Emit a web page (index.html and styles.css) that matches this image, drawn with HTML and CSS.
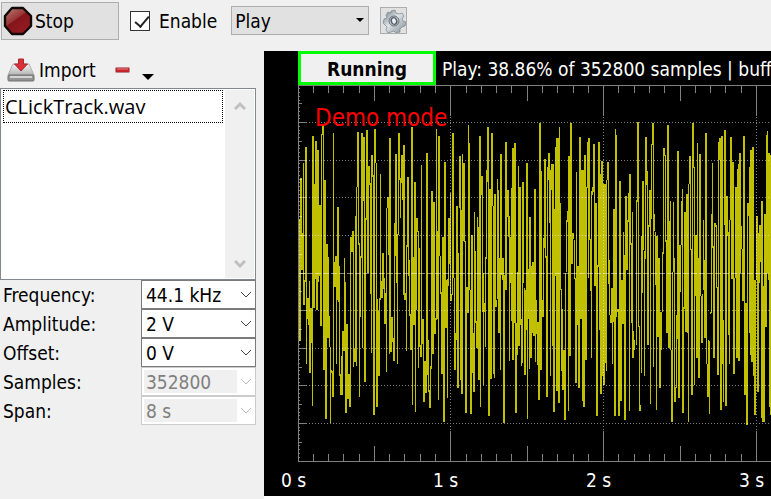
FILE: index.html
```html
<!DOCTYPE html>
<html lang="en">
<head>
  <meta charset="UTF-8" />
  <title>Player</title>
  <link rel="stylesheet" href="styles.css">
</head>
<body>

<header class="toolbar">
  <button class="stop" type="button">
    <svg width="30" height="30" viewBox="0 0 30 30">
      <defs>
        <linearGradient id="red" x1="0" y1="0" x2="0.7" y2="1">
          <stop offset="0" stop-color="#b98078" />
          <stop offset="0.48" stop-color="#973333" />
          <stop offset="0.5" stop-color="#84151a" />
          <stop offset="1" stop-color="#941c22" />
        </linearGradient>
      </defs>
      <path d="M9 2h11l8 8v10l-8 8H9l-7-8V10z" fill="url(#red)" stroke="#130808" stroke-width="2.4" stroke-linejoin="round" />
    </svg>
    <span>Stop</span>
  </button>
  <label class="enable"><input type="checkbox" checked>Enable</label>
  <div class="mode">
    <select aria-label="Mode"><option>Play</option></select>
    <svg width="8" height="5" viewBox="0 0 8 5"><path d="M0 0h8L4 4z" /></svg>
  </div>
  <button class="gear" type="button" aria-label="Settings">
    <svg width="24" height="24" viewBox="0 0 24 24">
      <defs>
        <linearGradient id="steel" x1="0" y1="0" x2="1" y2="1">
          <stop offset="0" stop-color="#6b7780" />
          <stop offset="0.45" stop-color="#dfe4e8" />
          <stop offset="1" stop-color="#7c8890" />
        </linearGradient>
      </defs>
      <path d="M9 2l4-1 1 3 3 1 3-1 2 3-2 3 1 2 3 1-1 4-3 1-2 2v3l-4 1-2-2-3 1-3 1-2-3 1-3-2-2-2-2 1-4 3-1-1-3 2-3 3 1z" fill="url(#steel)" stroke="#7a868e" stroke-width="0.7" />
      <circle cx="12" cy="12" r="5" fill="#bcc5cb" stroke="#66727b" />
      <ellipse cx="12" cy="12" rx="2.6" ry="3.4" fill="#edf1f3" stroke="#55616a" stroke-width="1.4" transform="rotate(-20 12 12)" />
    </svg>
  </button>
</header>

<main class="main">
  <section class="side">
    <div class="import-bar">
      <button class="plain" type="button">
        <svg width="28" height="24" viewBox="0 0 28 24">
          <defs>
            <linearGradient id="disk" x1="0" y1="0" x2="0" y2="1">
              <stop offset="0" stop-color="#f4f4f4" />
              <stop offset="1" stop-color="#b4b4b4" />
            </linearGradient>
          </defs>
          <path d="M6 6h16l5 11H1z" fill="url(#disk)" stroke="#b0b0b0" />
          <rect x="1" y="17" width="26" height="6" rx="1" fill="#949494" stroke="#707070" />
          <path d="M3 19h22" stroke="#d4d4d4" stroke-width="2" />
          <path d="M11.500 1h5v5h4l-6.500 7-6.500-7h4z" fill="#dc3038" stroke="#a62a30" />
        </svg>
        <span>Import</span>
      </button>
      <button class="plain remove" type="button" aria-label="Remove">
        <svg width="15" height="6" viewBox="0 0 15 6">
          <rect x="0.500" y="0.500" width="14" height="5" rx="1" fill="#c4252c" stroke="#b98a8c" />
          <path d="M2 2h11" stroke="#ea8588" />
        </svg>
      </button>
      <button class="plain more" type="button" aria-label="More">
        <svg width="12" height="6" viewBox="0 0 12 6"><path d="M0 0h12L6 6z" /></svg>
      </button>
    </div>

    <div class="files">
      <ul>
        <li>CLickTrack.wav</li>
      </ul>
      <div class="scrollbar">
        <svg width="12" height="9" viewBox="0 0 12 9"><path d="M1 8l5-5 5 5" /></svg>
        <svg width="12" height="9" viewBox="0 0 12 9"><path d="M1 1l5 5 5-5" /></svg>
      </div>
    </div>

    <form class="fields">
      <label for="frequency">Frequency:</label>
      <div class="combo">
        <select id="frequency"><option>44.1 kHz</option></select>
        <svg width="12" height="7" viewBox="0 0 12 7"><path d="M1 1l5 5 5-5" /></svg>
      </div>
      <label for="amplitude">Amplitude:</label>
      <div class="combo">
        <select id="amplitude"><option>2 V</option></select>
        <svg width="12" height="7" viewBox="0 0 12 7"><path d="M1 1l5 5 5-5" /></svg>
      </div>
      <label for="offset">Offset:</label>
      <div class="combo">
        <select id="offset"><option>0 V</option></select>
        <svg width="12" height="7" viewBox="0 0 12 7"><path d="M1 1l5 5 5-5" /></svg>
      </div>
      <label for="samples">Samples:</label>
      <div class="combo off">
        <select id="samples" disabled><option>352800</option></select>
        <svg width="12" height="7" viewBox="0 0 12 7"><path d="M1 1l5 5 5-5" /></svg>
      </div>
      <label for="span">Span:</label>
      <div class="combo off">
        <select id="span" disabled><option>8 s</option></select>
        <svg width="12" height="7" viewBox="0 0 12 7"><path d="M1 1l5 5 5-5" /></svg>
      </div>
    </form>
  </section>

  <section class="scope">
    <div class="status">
      <strong>Running</strong>
      <span>Play: 38.86% of 352800 samples | buff</span>
    </div>
    <svg class="plot" viewBox="264 85 507 411" preserveAspectRatio="xMinYMin slice" shape-rendering="crispEdges">
      <path id="wave" class="wave" />
      <path id="dots" class="grid dotted" />
      <path class="grid dashed" d="M299 273.500H771" />
      <path id="ticks" class="grid" />
      <text class="demo" x="315" y="126">Demo mode</text>
      <text x="281" y="487">0 s</text>
      <text x="433" y="487">1 s</text>
      <text x="586" y="487">2 s</text>
      <text x="739" y="487">3 s</text>
    </svg>
  </section>
</main>

<script src="scope.js"></script>
</body>
</html>
```
FILE: styles.css
```css
* { box-sizing: border-box; }

body {
  margin: 0;
  min-height: 100vh;
  display: flex;
  flex-direction: column;
  background: #f0f0f0;
  color: #000;
  font-family: "DejaVu Sans Condensed", "Noto Sans", sans-serif;
  font-size: 19px;
  line-height: 24px;
  overflow: hidden;
}

button, select, input {
  margin: 0;
  font: inherit;
  color: inherit;
  border-radius: 0;
}

svg { display: block; }

/* top bar */
.toolbar {
  display: flex;
  align-items: flex-start;
  height: 51px;
  padding: 2px 1px;
}

.stop {
  display: flex;
  align-items: center;
  gap: 2px;
  width: 118px;
  height: 38px;
  padding: 2px 1px;
  background: #e1e1e1;
  border: 1px solid #adadad;
}

.enable {
  display: flex;
  align-items: center;
  gap: 9px;
  height: 38px;
  margin-left: 11px;
}

.enable input {
  appearance: none;
  width: 20px;
  height: 20px;
  background: #fff;
  border: 1px solid #333;
}

.enable input:checked::before {
  content: "";
  display: block;
  width: 6px;
  height: 12px;
  margin: 1px 7px;
  border: solid #222;
  border-width: 0 2px 2px 0;
  transform: rotate(40deg);
}

.mode {
  position: relative;
  width: 138px;
  margin: 4px 11px 0 14px;
}

.mode select {
  appearance: none;
  width: 100%;
  height: 29px;
  padding: 0 3px;
  background: #e1e1e1;
  border: 1px solid #adadad;
}

.mode svg {
  position: absolute;
  right: 5px;
  top: 12px;
}

.gear {
  width: 27px;
  height: 27px;
  margin-top: 5px;
  padding: 1px;
  background: #e1e1e1;
  border: 1px solid #adadad;
}

.main {
  flex: 1;
  display: flex;
}

/* left panel */
.side {
  width: 256px;
  margin-right: 8px;
}

.import-bar {
  display: flex;
  height: 37px;
  padding: 7px 7px 0;
}

.plain {
  display: flex;
  align-items: center;
  gap: 4px;
  height: 24px;
  padding: 0;
  background: none;
  border: 0;
}

.remove { margin: 0 12px 0 19px; }
.more { padding-top: 14px; }

.files {
  display: flex;
  height: 192px;
  border: 1px solid #828790;
  background: #fff;
  padding: 1px;
}

.files ul {
  flex: 1;
  margin: 0;
  padding: 0 2px 0 1px;
  list-style: none;
  font-family: "Open Sans", "Noto Sans", sans-serif;
  font-size: 20px;
}

.files li {
  height: 33px;
  padding: 4px 1px;
  border: 1px dotted #000;
}

.scrollbar {
  display: flex;
  flex-direction: column;
  align-items: center;
  justify-content: space-between;
  width: 29px;
  padding: 11px 0 9px;
  background: #f0f0f0;
}

.scrollbar path {
  fill: none;
  stroke: #bfbfbf;
  stroke-width: 3;
}

.fields {
  display: grid;
  grid-template-columns: 141px 1fr;
  align-items: center;
}

.fields label { padding-left: 3px; }

.combo {
  position: relative;
  height: 29px;
  background: #fff;
  border: 1px solid #7a7a7a;
}

.combo select {
  appearance: none;
  display: block;
  width: 100%;
  height: 27px;
  padding: 0 4px;
  background: none;
  border: 0;
}

.combo svg {
  position: absolute;
  right: 3px;
  top: 10px;
}

.combo path {
  fill: none;
  stroke: #444;
}

.combo.off {
  border-color: #ccc;
  color: #808080;
}

.combo.off select {
  width: 93px;
  height: 23px;
  margin: 2px;
  padding: 0 2px;
  background: #f0f0f0;
  opacity: 1;
}

.combo.off path { stroke: #bbb; }

/* scope */
.scope {
  flex: 1;
  min-width: 0;
  background: #000;
  color: #fff;
  border-bottom: 3px solid #fff;
}

.status {
  display: flex;
  align-items: center;
  gap: 6px;
  height: 34px;
  padding-left: 34px;
  white-space: nowrap;
}

.status span { padding-top: 2px; }

.status strong {
  flex: none;
  width: 138px;
  height: 34px;
  padding-top: 3px;
  background: #f0f0f0;
  border: 3px solid #0f0;
  color: #000;
  text-align: center;
}

.plot {
  width: 100%;
  height: 411px;
}

.plot text { fill: #fff; }

.plot .demo {
  fill: #f00;
  font-size: 24px;
}

.wave { stroke: #c0c000; }

.grid {
  fill: none;
  stroke: rgba(255, 255, 255, 0.5);
}

.dotted { stroke-dasharray: 1 2; }
.dashed { stroke-dasharray: 6 2; }
```
FILE: scope.js
```js
// x, min, max for every sample column
const samples = `
299 219 341,300 178 341,301 178 270,302 233 270,303 163 305,304 280 305,305 147 282,306 147 364,307 298 319,308 298 325,
309 281 373,310 308 373,311 308 343,312 136 406,313 136 308,314 184 308,315 141 279,316 141 310,317 150 310,318 150 282,
319 205 276,320 205 326,321 134 326,322 125 135,323 125 370,324 180 370,325 180 419,326 244 419,327 244 338,328 257 338,
329 316 347,330 347 423,331 370 373,332 371 397,333 133 397,334 262 287,335 256 287,336 256 364,337 207 300,338 207 302,
339 266 376,340 374 395,341 356 395,342 331 395,343 331 351,344 258 351,345 282 413,346 324 413,347 324 399,348 374 399,
349 374 407,350 237 407,351 237 252,352 231 252,353 231 367,354 349 362,355 216 362,356 187 366,357 132 187,358 132 245,
359 243 397,360 256 317,361 133 258,362 133 348,363 137 201,364 137 382,365 218 382,366 130 220,367 130 273,368 166 273,
369 166 185,370 183 294,371 155 353,372 155 177,373 175 415,374 129 415,375 129 163,376 163 407,377 299 407,378 311 376,
379 298 376,380 174 300,381 281 298,382 253 298,383 253 289,384 278 324,385 293 324,386 208 372,387 197 208,388 197 255,
389 138 354,390 138 352,391 317 352,392 317 342,393 338 361,394 223 361,395 154 256,396 154 283,397 234 364,398 133 235,
399 133 180,400 178 218,401 155 183,402 155 200,403 145 295,404 145 300,405 293 300,406 245 351,407 177 247,408 177 276,
409 260 316,410 314 350,411 127 350,412 127 405,413 257 325,414 182 325,415 182 412,416 218 310,417 218 232,418 231 368,
419 248 347,420 345 357,421 165 357,422 319 344,423 319 402,424 361 402,425 361 393,426 153 393,427 153 375,428 340 392,
429 390 408,430 366 408,431 191 369,432 191 354,433 202 354,434 202 334,435 318 334,436 129 320,437 231 319,438 136 400,
439 136 256,440 256 294,441 292 374,442 237 374,443 237 422,444 162 422,445 162 328,446 280 328,447 279 398,448 218 286,
449 218 264,450 193 301,451 294 301,452 133 295,453 133 278,454 278 370,455 333 370,456 206 340,457 206 388,458 253 388,
459 156 208,460 156 380,461 210 394,462 154 394,463 163 241,464 163 242,465 241 413,466 287 413,467 287 313,468 125 313,
469 143 290,470 290 414,471 235 414,472 235 373,473 333 392,474 212 392,475 251 323,476 321 348,477 217 348,478 227 380,
479 136 380,480 136 407,481 176 195,482 176 312,483 273 385,484 303 312,485 257 347,486 170 259,487 127 182,488 127 416,
489 189 416,490 189 379,491 133 379,492 133 206,493 206 374,494 194 378,495 194 307,496 300 307,497 179 299,498 190 333,
499 258 333,500 154 370,501 154 275,502 258 280,503 258 423,504 275 423,505 142 290,506 142 290,507 190 217,508 190 237,
509 216 361,510 237 283,511 188 321,512 148 360,513 148 360,514 143 323,515 143 413,516 323 413,517 272 355,518 166 346,
519 187 346,520 187 325,521 319 366,522 182 363,523 182 283,524 288 375,525 290 375,526 163 330,527 163 419,528 269 319,
529 217 369,530 217 358,531 266 358,532 262 333,533 262 336,534 189 336,535 189 362,536 300 334,537 322 365,538 322 400,
539 123 400,540 123 370,541 171 370,542 300 317,543 238 317,544 159 248,545 159 258,546 256 397,547 167 397,548 153 180,
549 153 223,550 170 376,551 164 190,552 164 346,553 164 412,554 209 412,555 147 276,556 138 391,557 138 391,558 138 403,
559 127 403,560 203 290,561 289 371,562 309 390,563 350 390,564 350 420,565 273 420,566 220 272,567 211 222,568 156 411,
569 156 356,570 123 356,571 123 264,572 233 264,573 233 239,574 240 279,575 278 383,576 172 383,577 266 325,578 266 388,
579 137 388,580 137 319,581 170 319,582 170 401,583 170 407,584 155 407,585 155 360,586 187 360,587 142 188,588 138 278,
589 138 240,590 239 291,591 191 358,592 187 195,593 144 192,594 144 286,595 203 286,596 203 416,597 265 416,598 142 267,
599 142 330,600 174 394,601 161 394,602 161 376,603 184 385,604 184 385,605 184 363,606 180 371,607 162 180,608 162 284,
609 260 315,610 315 323,611 288 323,612 288 364,613 209 322,614 209 416,615 129 416,616 135 317,617 309 312,618 309 416,
619 181 416,620 181 401,621 280 401,622 280 324,623 232 324,624 255 420,625 196 420,626 196 270,627 220 270,628 193 222,
629 174 411,630 174 245,631 243 323,632 212 358,633 331 358,634 340 350,636 200 345,637 122 202,638 122 327,639 326 411,
640 405 411,641 236 373,642 181 293,643 181 250,644 251 376,645 137 259,646 137 185,647 171 345,648 225 345,649 190 227,
650 190 404,651 144 219,652 123 145,653 123 367,654 214 231,655 232 285,656 236 410,657 236 337,658 258 337,659 258 388,
660 312 388,661 312 350,662 252 312,663 148 254,664 148 156,665 155 242,666 240 333,667 125 333,668 125 348,669 221 348,
670 201 350,671 350 422,672 272 422,673 202 272,674 258 402,675 387 402,676 315 388,677 151 339,678 151 398,679 245 398,
680 245 292,681 201 245,682 189 413,683 307 413,684 212 309,685 212 332,686 194 332,687 194 333,688 184 422,689 156 184,
690 156 250,691 249 395,692 123 395,693 123 168,694 167 385,695 235 296,696 235 358,697 143 358,698 258 378,699 154 378,
700 154 296,701 296 343,702 294 343,703 220 290,704 260 338,705 133 338,706 133 364,707 364 397,708 340 397,709 341 414,
710 312 314,711 214 313,712 163 248,713 246 358,714 223 358,715 223 227,716 225 288,717 287 375,718 142 375,719 138 160,
720 138 410,721 136 410,722 136 364,723 320 402,724 130 225,725 130 406,726 196 406,727 196 236,728 232 335,729 220 364,
730 137 220,731 137 279,732 162 279,733 162 374,734 278 374,735 187 278,736 187 358,737 169 358,738 164 361,739 153 361,
740 153 273,741 226 249,742 249 301,743 136 301,744 136 395,745 303 395,746 303 425,747 203 425,748 203 216,749 167 333,
750 150 355,751 150 362,752 147 362,753 147 376,754 280 415,755 280 415,756 216 280,757 216 392,758 233 392,759 225 283,
760 225 262,761 201 418,762 201 422,763 286 422,764 214 422,765 214 327,766 135 327,767 131 273,768 153 280,769 153 407,
770 155 415`;

const wave = samples.split(",").map(s => {
  const [x, top, bottom] = s.trim().split(" ");
  return `M${x}.5 ${top}V${bottom}`;
});
document.getElementById("wave").setAttribute("d", wave.join(""));

const left = 298, top0 = 85, bottom0 = 461, right = 771;
const rows = [122, 160, 197, 235, 310, 348, 385, 423];
const cols = [450, 603, 756];

let dots = "";
rows.forEach(y => dots += `M306 ${y}.5H${right}`);
cols.forEach(x => dots += `M${x}.5 117V430`);
document.getElementById("dots").setAttribute("d", dots);

let ticks = `M${left} ${top0}.5H${right}M${left}.5 86V461M${left} ${bottom0}.5H${right}`;
for (let i = 1; i <= 30; i++) {
  const x = Math.floor(left + i * 15.28) + 0.5;
  const up = i % 10 === 0 ? 30 : i % 5 === 0 ? 15 : 7;
  ticks += `M${x} 86v${up}M${x} 461v-${up}`;
}
for (let i = 1; i < 100; i++) {
  const y = Math.floor(top0 + i * 3.76) + 0.5;
  const w = i % 10 === 0 ? 7 : i % 5 === 0 ? 3 : 1;
  ticks += `M299 ${y}h${w}`;
}
document.getElementById("ticks").setAttribute("d", ticks);
```
